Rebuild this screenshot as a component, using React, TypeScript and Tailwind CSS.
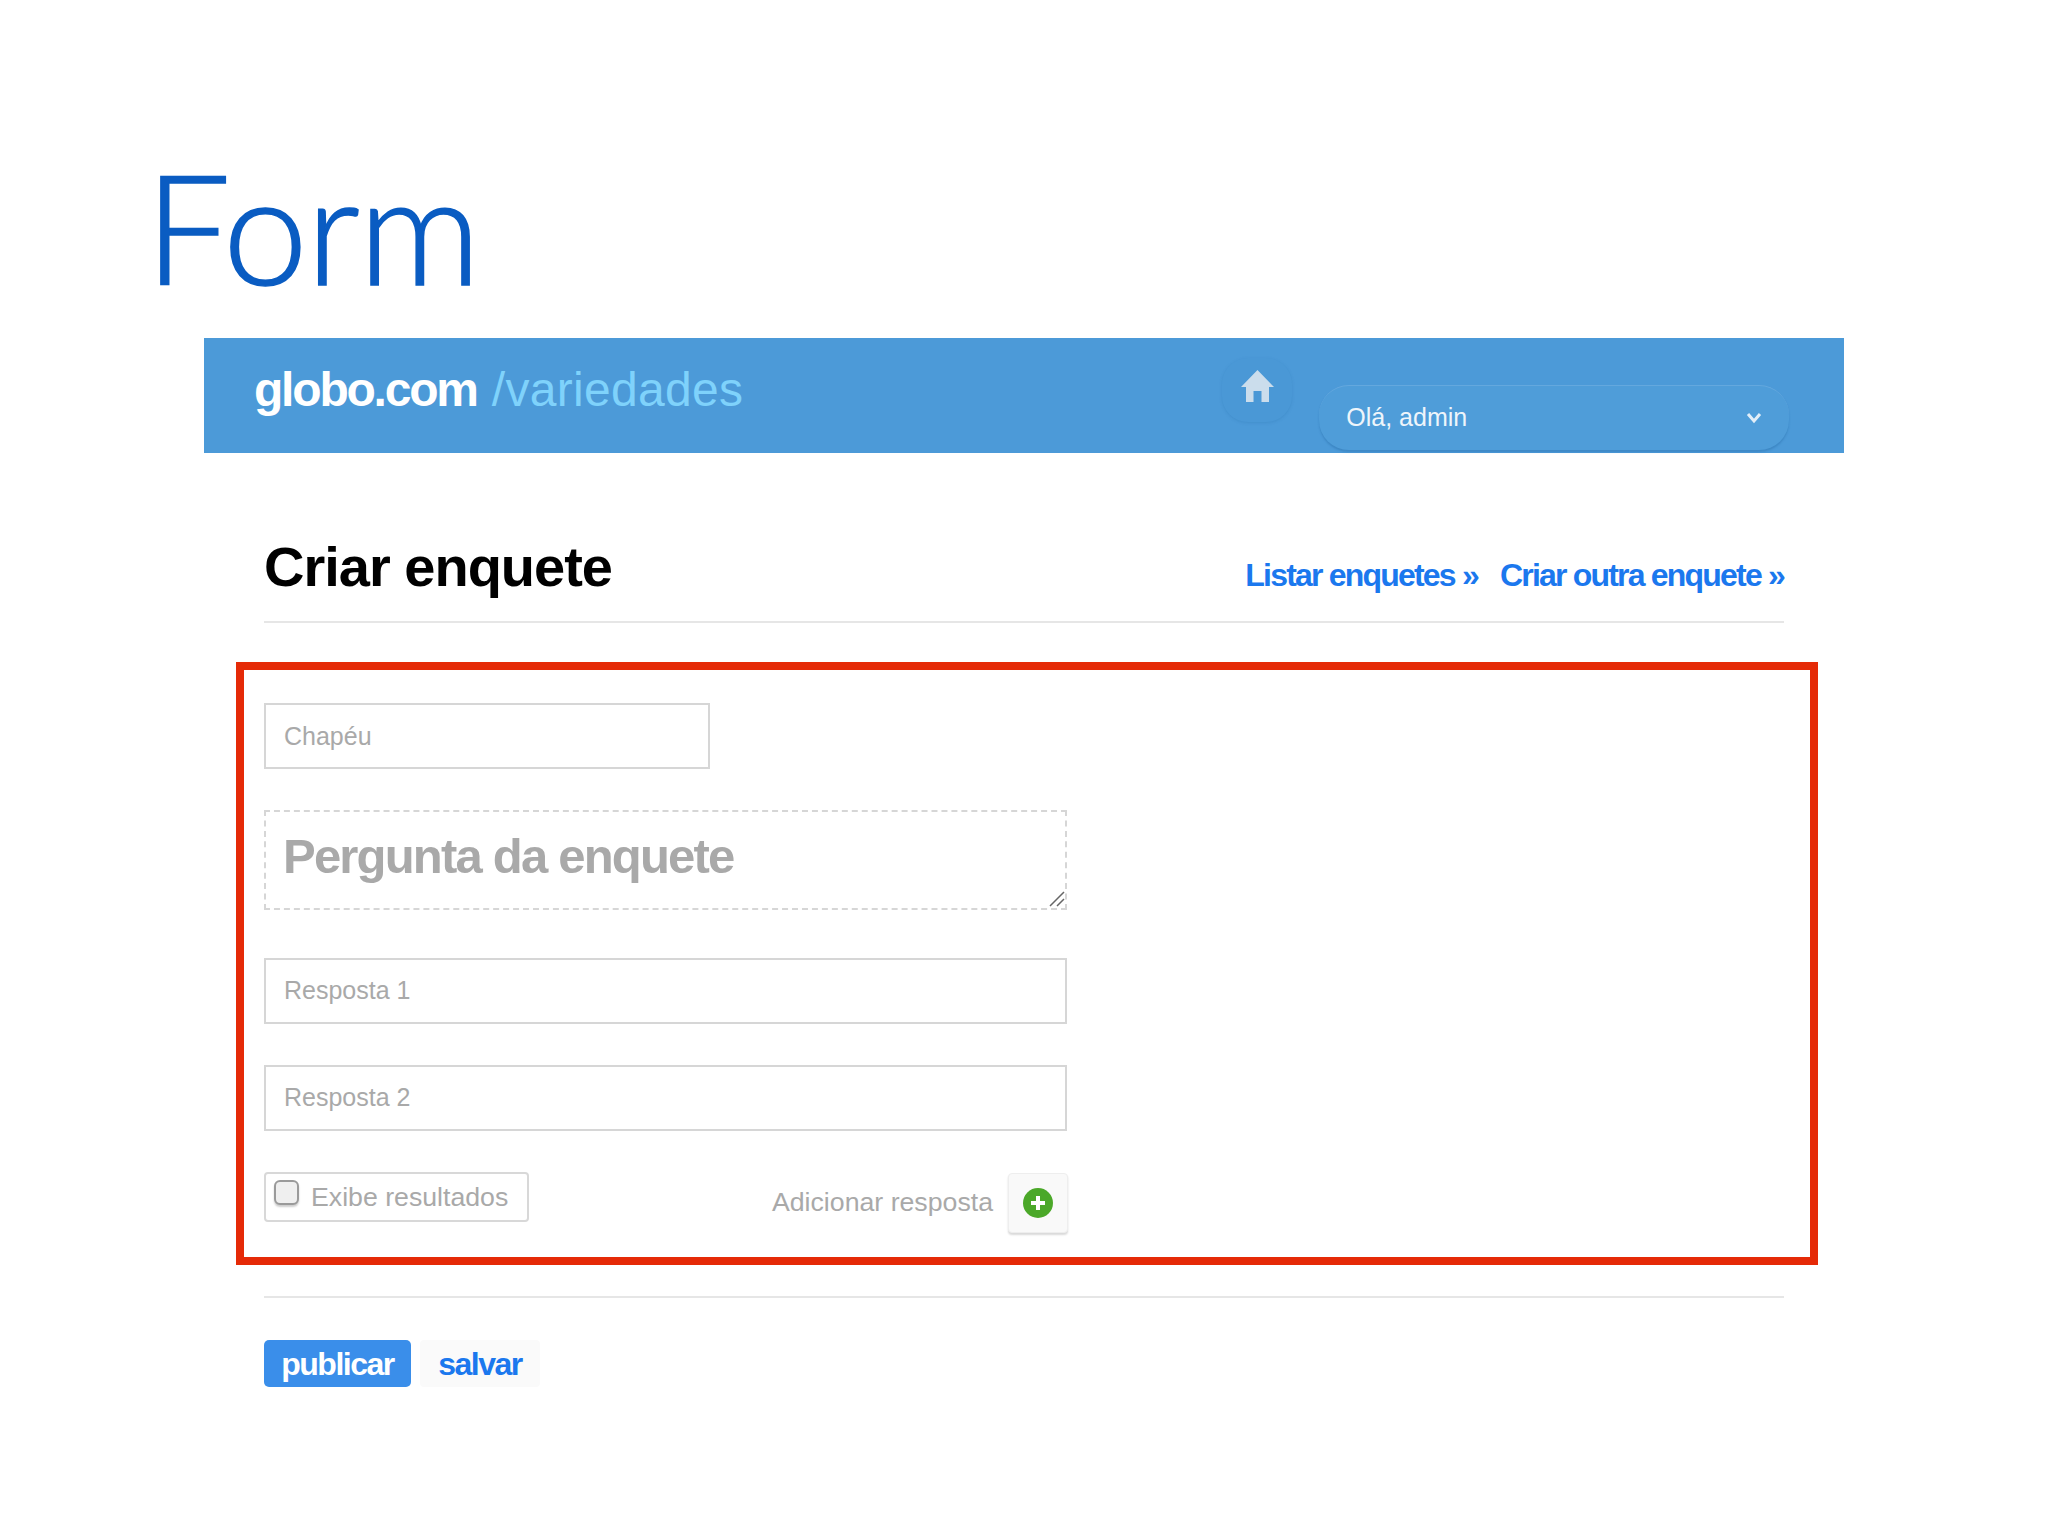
const font = { fontFamily: '"Liberation Sans", Arial, sans-serif' };

const HomeIcon = () => (
  <svg width="33" height="32" viewBox="0 0 33 32" fill="#cbddec">
    <path d="M16.5 0 L33 17 L28 17 L28 32 L20.5 32 L20.5 21 L12.5 21 L12.5 32 L5 32 L5 17 L0 17 Z" />
  </svg>
);

const Field = ({ placeholder }: { placeholder: string }) => (
  <input
    placeholder={placeholder}
    className="block h-[66px] w-[803px] border-2 border-[#d6d6d6] bg-white px-[18px] pb-[2px] text-[25px] text-[#666] outline-none placeholder:text-[#a9a9a9]"
  />
);

export default function App() {
  return (
    <div className="h-[1536px] w-[2048px] overflow-hidden bg-white" style={font}>
      <div className="h-[338px] pl-[145px] pt-[141px]">
        <h1 className="font-['Lato',sans-serif] text-[152px] leading-[170px] font-light tracking-[-1.5px] text-[#0a5cc2] [-webkit-text-stroke:1.5px_#0a5cc2]">
          Form
        </h1>
      </div>

      {/* barra azul */}
      <div className="ml-[204px] flex h-[115px] w-[1640px] bg-[#4c9ad8]">
        <div className="ml-[50px] flex h-[104px] items-center whitespace-nowrap text-[48px] leading-none">
          <span className="font-bold tracking-[-2.2px] text-white">globo.com</span>
          <span className="ml-[15px] tracking-[0.3px] text-[#7fd2fb]">/variedades</span>
        </div>
        <div className="ml-[479px] mt-[20px] flex h-[64px] w-[70px] items-center justify-center rounded-[26px] bg-[#4a98d6] pb-[8px] shadow-[0_1px_3px_rgba(40,110,170,0.25)]">
          <HomeIcon />
        </div>
        <div className="ml-[27px] mt-[47px] flex h-[65px] w-[470px] items-center justify-between rounded-[30px] border-t border-[#64a8de] bg-[#4f9dd9] pl-[27px] pr-[27px] shadow-[0_2px_2px_rgba(40,110,170,0.4)]">
          <span className="text-[25px] text-[#eef5fb]">Olá, admin</span>
          <svg width="16" height="12" viewBox="0 0 16 12" fill="none" stroke="#e2eef8" strokeWidth="3">
            <path d="M2 2 L8 9 L14 2" />
          </svg>
        </div>
      </div>

      {/* titulo */}
      <div className="ml-[264px] flex h-[170px] w-[1520px] items-end justify-between border-b-2 border-[#e6e6e6] pb-[14px]">
        <h2 className="text-[56px] leading-[80px] font-bold tracking-[-1px] text-black">Criar enquete</h2>
        <div className="flex gap-[22px] pb-[10px] text-[32px] leading-[44px] font-bold tracking-[-1.8px] text-[#1b78ee]">
          <a>Listar enquetes »</a>
          <a>Criar outra enquete »</a>
        </div>
      </div>

      {/* area em destaque */}
      <div className="ml-[236px] mt-[39px] h-[603px] w-[1582px] border-8 border-[#e52a07] pl-[20px] pt-[33px]">
        <input
          placeholder="Chapéu"
          className="block h-[66px] w-[446px] border-2 border-[#d6d6d6] bg-white px-[18px] text-[25px] text-[#666] outline-none placeholder:text-[#a9a9a9]"
        />
        <div className="relative mt-[41px] h-[100px] w-[803px]">
          <textarea
            placeholder="Pergunta da enquete"
            className="block h-[100px] w-[803px] resize-none border-2 border-dashed border-[#d6d6d6] bg-white px-[17px] pt-[13px] text-[49px] leading-[62px] font-bold tracking-[-1.8px] outline-none placeholder:text-[#a9a9a9]"
          />
          <svg className="absolute bottom-[3px] right-[2px]" width="16" height="16" viewBox="0 0 16 16" fill="none" stroke="#666" strokeWidth="1.5">
            <path d="M1 15 L15 1 M8 15 L15 8" />
          </svg>
        </div>
        <div className="mt-[48px] flex flex-col gap-[41px]">
          <Field placeholder="Resposta 1" />
          <Field placeholder="Resposta 2" />
        </div>
        <div className="mt-[41px] flex w-[804px] items-start justify-between">
          <label className="flex h-[50px] w-[265px] items-start rounded-[4px] border-2 border-[#d8d8d8] pl-[8px] pt-[6px]">
            <input
              type="checkbox"
              className="h-[25px] w-[25px] appearance-none rounded-[6px] border-2 border-[#9a9a9a] bg-[#efefef] shadow-[0_2px_2px_rgba(0,0,0,0.2)]"
            />
            <span className="ml-[12px] text-[26.7px] leading-[34px] text-[#a9a9a9]">Exibe resultados</span>
          </label>
          <div className="mt-[1px] flex items-start">
            <span className="mt-[12px] text-[26.7px] leading-[34px] text-[#a9a9a9]">Adicionar resposta</span>
            <button className="ml-[15px] flex h-[60px] w-[60px] items-center justify-center rounded-[4px] border border-[#eeeeee] bg-[#f9f9f9] shadow-[0_2px_2px_rgba(0,0,0,0.15)]">
              <svg width="30" height="30" viewBox="0 0 30 30">
                <circle cx="15" cy="15" r="15" fill="#4ba829" />
                <path d="M15 8 V22 M8 15 H22" stroke="#fff" strokeWidth="4" />
              </svg>
            </button>
          </div>
        </div>
      </div>

      {/* acoes */}
      <div className="ml-[264px] mt-[31px] w-[1520px] border-t-2 border-[#e6e6e6] pt-[42px]">
        <div className="flex items-start gap-[9px] text-[32px] font-bold tracking-[-1.5px]">
          <button className="h-[47px] w-[147px] rounded-[5px] bg-[#3a8eea] pb-[4px] text-white">publicar</button>
          <button className="h-[47px] w-[120px] rounded-[4px] bg-[#fafafa] pb-[4px] text-[#1b78ee]">salvar</button>
        </div>
      </div>
    </div>
  );
}
